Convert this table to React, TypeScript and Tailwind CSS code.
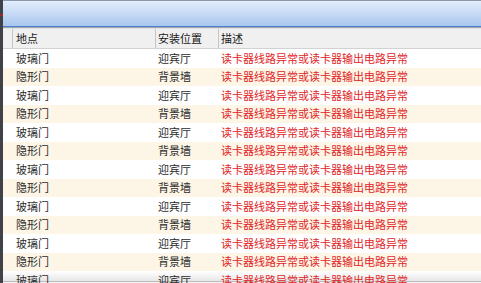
import React from 'react';

const rows = Array.from({ length: 13 }, (_, i) =>
  i % 2 === 0
    ? { place: '玻璃门', pos: '迎宾厅' }
    : { place: '隐形门', pos: '背景墙' }
);

const desc = '读卡器线路异常或读卡器输出电路异常';

export default function App() {
  return (
    <div
      className="w-[481px] h-[283px] overflow-hidden flex bg-white text-[11px] leading-none"
      style={{ fontFamily: '"Noto Sans CJK SC", "Noto Sans", sans-serif' }}
    >
      {/* left dark edge */}
      <div className="w-[3px] shrink-0 bg-[#3f4347] flex flex-col">
        <div className="h-[14px]" />
        <div className="h-[2px] bg-[#a02828]" />
      </div>

      <div className="flex-1 flex flex-col min-w-0 min-h-0">
        {/* blue title bar */}
        <div className="h-[1px] shrink-0 bg-[#8a98ae]" />
        <div className="h-[25px] shrink-0 bg-[linear-gradient(to_bottom,#e3edfb,#c9dcf6_45%,#a9c6ef)]" />
        <div className="h-[1px] shrink-0 bg-[#4f7fcf]" />
        <div className="h-[1px] shrink-0 bg-[#9ea8b4]" />
        <div className="h-[1px] shrink-0 bg-[#e4e4e4]" />

        {/* column header */}
        <div className="h-[20px] shrink-0 flex bg-[#f0f0f0] border-b border-[#d2d2d2] text-[#1a1a1a]">
          <div className="w-[10px] border-r border-[#c6c6c6]" />
          <div className="w-[143px] border-r border-[#c6c6c6] pl-[3px] flex items-center">地点</div>
          <div className="w-[63px] border-r border-[#c6c6c6] pl-[2px] flex items-center">安装位置</div>
          <div className="flex-1 pl-[2px] flex items-center">描述</div>
        </div>

        {/* body */}
        <div className="flex flex-col shrink-0">
          {rows.map((r, i) => (
            <div
              key={i}
              className={`h-[18.5px] shrink-0 flex items-center ${
                i === 12
                  ? 'bg-[linear-gradient(to_bottom,#ffffff_0px,#e6e6e6_10px,#bcbcbc_10px,#bcbcbc_11px,#f3f3f3_11px)]'
                  : i % 2 === 1
                  ? 'bg-[#fdf5e6]'
                  : 'bg-white'
              }`}
            >
              <div className="w-[13px] shrink-0" />
              <div className="w-[142px] shrink-0 text-[#2b2b2b]">{r.place}</div>
              <div className="w-[63px] shrink-0 text-[#2b2b2b]">{r.pos}</div>
              <div className="flex-1 text-[#e0241f] whitespace-nowrap">{desc}</div>
            </div>
          ))}
        </div>
      </div>
    </div>
  );
}
